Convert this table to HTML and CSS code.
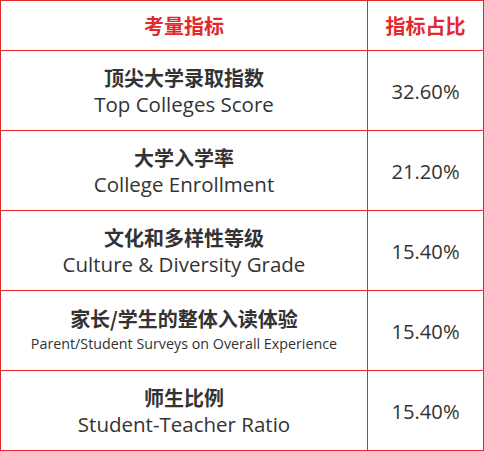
FILE: index.html
```html
<!DOCTYPE html>
<html lang="zh">
<head>
<meta charset="utf-8">
<link rel="stylesheet" href="styles.css">
</head>
<body>
<div class="table">
  <div class="cell head">考量指标</div>
  <div class="cell head">指标占比</div>

  <div class="cell name"><div class="zh">顶尖大学录取指数</div><div class="en">Top Colleges Score</div></div>
  <div class="cell pct">32.60%</div>

  <div class="cell name"><div class="zh">大学入学率</div><div class="en">College Enrollment</div></div>
  <div class="cell pct">21.20%</div>

  <div class="cell name"><div class="zh">文化和多样性等级</div><div class="en">Culture &amp; Diversity Grade</div></div>
  <div class="cell pct">15.40%</div>

  <div class="cell name"><div class="zh">家长/学生的整体入读体验</div><div class="en small">Parent/Student Surveys on Overall Experience</div></div>
  <div class="cell pct">15.40%</div>

  <div class="cell name"><div class="zh">师生比例</div><div class="en">Student-Teacher Ratio</div></div>
  <div class="cell pct">15.40%</div>
</div>
</body>
</html>
```

FILE: styles.css
```css
html, body {
  margin: 0;
  padding: 0;
  background: #ffffff;
}
.table {
  width: 484px;
  height: 451px;
  box-sizing: border-box;
  display: grid;
  grid-template-columns: 367px 116px;
  grid-template-rows: 50px repeat(5, 80px);
  border-left: 1px solid #e2292d;
  border-top: 1px solid #e2292d;
  font-family: "Open Sans", "Noto Sans CJK SC", sans-serif;
  color: #333333;
}
.cell {
  box-sizing: border-box;
  border-right: 1px solid #e2292d;
  border-bottom: 1px solid #e2292d;
  display: flex;
  flex-direction: column;
  align-items: center;
  justify-content: center;
  text-align: center;
}
.head {
  color: #e2292d;
  font-family: "Noto Sans CJK SC", sans-serif;
  font-weight: 700;
  font-size: 20px;
  line-height: 26px;
}
.zh {
  font-family: "Noto Sans CJK SC", sans-serif;
  font-weight: 700;
  font-size: 20px;
  line-height: 27px;
}
.en {
  font-size: 20.5px;
  line-height: 27px;
}
.en.small {
  font-size: 14.3px;
  line-height: 24px;
}
.pct {
  font-size: 20.2px;
}
```
